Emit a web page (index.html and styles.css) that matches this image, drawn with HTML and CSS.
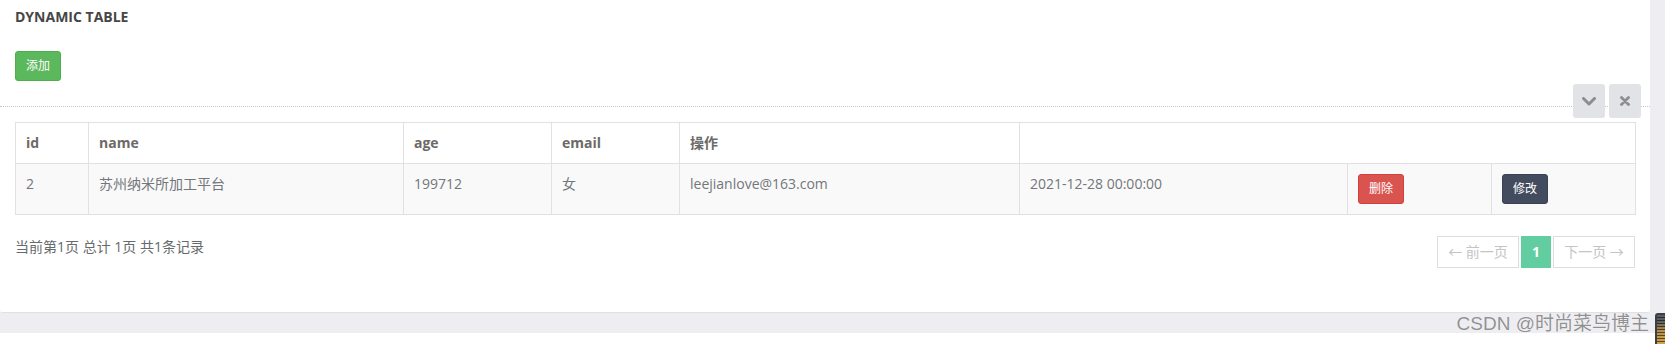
FILE: index.html
```html
<!DOCTYPE html>
<html lang="zh-CN">
<head>
<meta charset="utf-8">
<title>Dynamic Table</title>
<link rel="stylesheet" href="styles.css">
</head>
<body>
<div class="page">
  <div class="main-row">
    <section class="panel">
      <header class="panel-head">
        <h5 class="panel-title">DYNAMIC TABLE</h5>
        <button class="btn btn-add" type="button">添加</button>
      </header>
      <div class="panel-body">
        <div class="tools">
          <button class="tool" type="button" aria-label="collapse">
            <svg width="14" height="9" viewBox="0 0 14 9"><path d="M1.5 1.5 L7 7 L12.5 1.5" fill="none" stroke="#8b8d92" stroke-width="3" stroke-linecap="round" stroke-linejoin="round"/></svg>
          </button>
          <button class="tool" type="button" aria-label="close">
            <svg width="10" height="10" viewBox="0 0 10 10"><path d="M1.5 1.5 L8.5 8.5 M8.5 1.5 L1.5 8.5" fill="none" stroke="#8b8d92" stroke-width="2.8" stroke-linecap="round"/></svg>
          </button>
        </div>
        <table class="data-table">
          <colgroup>
            <col class="c-id"><col class="c-name"><col class="c-age"><col class="c-email"><col class="c-op"><col class="c-date"><col class="c-del"><col class="c-mod">
          </colgroup>
          <thead>
            <tr><th>id</th><th>name</th><th>age</th><th>email</th><th>操作</th><th colspan="3"></th></tr>
          </thead>
          <tbody>
            <tr>
              <td>2</td>
              <td>苏州纳米所加工平台</td>
              <td>199712</td>
              <td>女</td>
              <td>leejianlove@163.com</td>
              <td>2021-12-28 00:00:00</td>
              <td><button class="btn btn-del" type="button">删除</button></td>
              <td><button class="btn btn-mod" type="button">修改</button></td>
            </tr>
          </tbody>
        </table>
        <div class="table-foot">
          <div class="summary">当前第1页 总计 1页 共1条记录</div>
          <ul class="pager">
            <li class="page-item disabled">← 前一页</li>
            <li class="page-item active">1</li>
            <li class="page-item disabled">下一页 →</li>
          </ul>
        </div>
      </div>
    </section>
    <aside class="gutter"></aside>
  </div>
  <div class="strip"></div>
  <div class="bottom-white"></div>
  <div class="watermark">CSDN @时尚菜鸟博主</div>
  <div class="corner-widget"></div>
</div>
</body>
</html>
```

FILE: styles.css
```css
* { box-sizing: border-box; }

html, body {
  margin: 0;
  padding: 0;
}

body {
  background: #ffffff;
  font-family: "Open Sans", "Noto Sans CJK SC", sans-serif;
  font-size: 14px;
  color: #676a6c;
}

.page {
  position: relative;
  width: 1665px;
  height: 344px;
  overflow: hidden;
}

.main-row {
  display: flex;
}

.panel {
  width: 1650px;
  background: #ffffff;
  border-radius: 0 0 4px 4px;
  box-shadow: 0 1px 1px rgba(0, 0, 0, 0.06);
}

.gutter {
  flex: 1;
  background: #eeeef2;
}

.strip {
  height: 21px;
  background: #eeeef2;
}

.bottom-white {
  height: 11px;
  background: #ffffff;
}

.panel-head {
  padding: 7px 15px 25px;
  display: flex;
  flex-direction: column;
  align-items: flex-start;
}

.panel-title {
  margin: 0 0 24px;
  font-size: 14px;
  line-height: 20px;
  font-weight: 700;
  color: #464646;
}

.btn {
  font-family: "Open Sans", "Noto Sans CJK SC", sans-serif;
  font-size: 12px;
  line-height: 18px;
  padding: 5px 10px;
  height: 30px;
  border: 1px solid transparent;
  border-radius: 3px;
  color: #ffffff;
  cursor: pointer;
}

.btn-add {
  width: 46px;
  padding: 5px 0;
  background: #5cb85c;
  border-color: #4cae4c;
}

.btn-del {
  width: 46px;
  padding: 5px 0;
  background: #d9534f;
  border-color: #d43f3a;
}

.btn-mod {
  width: 46px;
  padding: 5px 0;
  background: #434c5e;
  border-color: #3a4252;
}

.panel-body {
  position: relative;
  border-top: 1px dotted #c8c8c8;
  padding: 15px 15px 44px;
}

.tools {
  position: absolute;
  top: -23px;
  right: 9px;
  display: flex;
  gap: 4px;
}

.tool {
  width: 32px;
  height: 34px;
  border: 0;
  border-radius: 3px;
  background: #e2e3e7;
  display: flex;
  align-items: center;
  justify-content: center;
  padding: 0;
}

.data-table {
  width: 1620px;
  table-layout: fixed;
  border-collapse: collapse;
  border: 1px solid #e1e1e1;
}

.c-id { width: 73px; }
.c-name { width: 315px; }
.c-age { width: 148px; }
.c-email { width: 128px; }
.c-op { width: 340px; }
.c-date { width: 328px; }
.c-del { width: 144px; }
.c-mod { width: 144px; }

.data-table th,
.data-table td {
  border: 1px solid #e1e1e1;
  padding: 10px;
  line-height: 20px;
  text-align: left;
  vertical-align: top;
  white-space: nowrap;
}

.data-table th {
  font-weight: 700;
  color: #6c6a68;
  background: #ffffff;
}

.data-table td {
  background: #f9f9f9;
  color: #73767a;
}

.data-table td .btn {
  display: block;
}

.table-foot {
  margin-top: 21px;
  display: flex;
  justify-content: space-between;
  align-items: flex-start;
}

.summary {
  font-size: 14px;
  line-height: 20px;
  padding-top: 1px;
  color: #676a6c;
}

.pager {
  list-style: none;
  margin: 0;
  padding: 0;
  display: flex;
  gap: 2px;
}

.page-item {
  height: 32px;
  padding: 5px 11px;
  line-height: 20px;
  font-size: 14px;
  border: 1px solid #dddddd;
  background: #ffffff;
}

.page-item.disabled {
  color: #c4c4c4;
  width: 82px;
  text-align: center;
  padding: 5px 0;
}

.page-item.active {
  width: 30px;
  padding: 5px 0;
  text-align: center;
  background: #62cda1;
  border-color: #62cda1;
  color: #ffffff;
  font-weight: 700;
}

.watermark {
  position: absolute;
  top: 314px;
  right: 16px;
  font-family: "Liberation Sans", "Noto Sans CJK SC", sans-serif;
  font-size: 19px;
  line-height: 20px;
  color: rgba(110, 110, 110, 0.75);
  text-shadow: 0 0 1px rgba(255, 255, 255, 0.8);
  white-space: nowrap;
}

.corner-widget {
  position: absolute;
  left: 1655px;
  top: 313px;
  width: 12px;
  height: 34px;
  border-radius: 3px;
  background:
    repeating-linear-gradient(to bottom, transparent 0 2px, rgba(0,0,0,0.55) 2px 3px),
    linear-gradient(to bottom, #5a5d63 0, #5a5d63 6px, #b89048 16px, #d4a64a 100%);
  border: 2px solid #3c3f45;
}
```
